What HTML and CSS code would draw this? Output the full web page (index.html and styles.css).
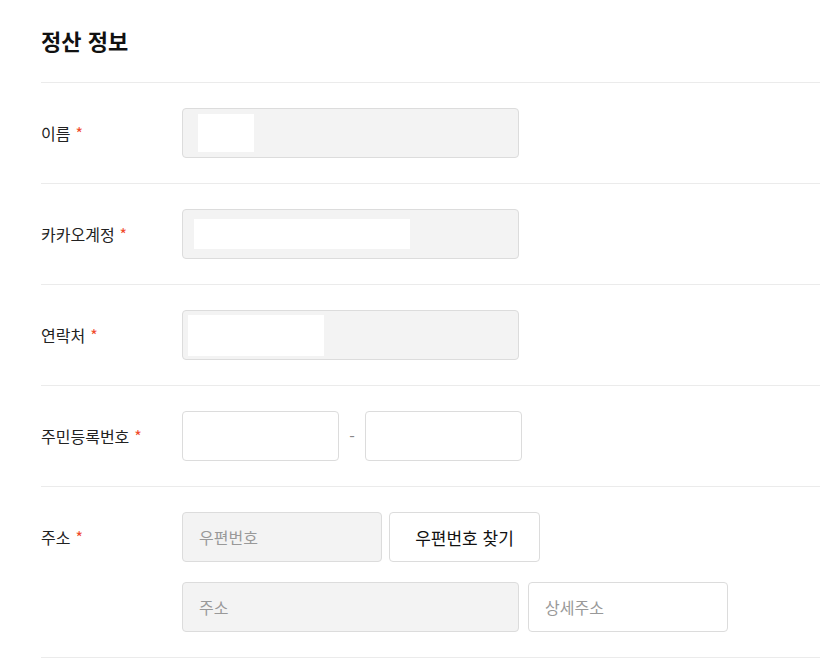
FILE: index.html
```html
<!DOCTYPE html>
<html lang="ko">
<head>
  <meta charset="UTF-8" />
  <meta name="viewport" content="width=device-width, initial-scale=1.0" />
  <title>정산 정보</title>
  <link rel="stylesheet" href="styles.css">
</head>
<body>
<main class="settle">
  <h2 class="settle-title">정산 정보</h2>

  <div class="row">
    <label class="row-label">이름 <span class="req">*</span></label>
    <div class="row-field">
      <div class="input readonly wide">
        <span class="mask mask-name"></span>
      </div>
    </div>
  </div>

  <div class="row">
    <label class="row-label">카카오계정 <span class="req">*</span></label>
    <div class="row-field">
      <div class="input readonly wide">
        <span class="mask mask-kakao"></span>
      </div>
    </div>
  </div>

  <div class="row">
    <label class="row-label">연락처 <span class="req">*</span></label>
    <div class="row-field">
      <div class="input readonly wide">
        <span class="mask mask-phone"></span>
      </div>
    </div>
  </div>

  <div class="row">
    <label class="row-label">주민등록번호 <span class="req">*</span></label>
    <div class="row-field">
      <div class="line">
        <input class="input half" type="text" />
        <span class="dash">-</span>
        <input class="input half" type="password" />
      </div>
    </div>
  </div>

  <div class="row">
    <label class="row-label">주소 <span class="req">*</span></label>
    <div class="row-field stack">
      <div class="line zip-line">
        <input class="input readonly narrow" type="text" placeholder="우편번호" disabled />
        <button class="btn" type="button">우편번호 찾기</button>
      </div>
      <div class="line addr-line">
        <input class="input readonly wide" type="text" placeholder="주소" disabled />
        <input class="input narrow" type="text" placeholder="상세주소" />
      </div>
    </div>
  </div>
</main>
</body>
</html>
```

FILE: styles.css
```css
body {
  margin: 0;
  padding: 0 0 0 41px;
  font-family: "Noto Sans CJK KR", "Noto Sans", sans-serif;
  color: #222;
  background: #fff;
  overflow: hidden;
}

.settle {
  width: 820px;
}

.settle-title {
  margin: 0;
  padding: 25px 0 27px;
  font-size: 22px;
  line-height: 30px;
  font-weight: 700;
  color: #111;
  border-bottom: 1px solid #ebebeb;
}

.row {
  display: flex;
  align-items: flex-start;
  padding: 25px 0;
  border-bottom: 1px solid #ebebeb;
}

.row-label {
  width: 141px;
  flex-shrink: 0;
  height: 50px;
  display: flex;
  align-items: center;
  font-size: 16px;
  color: #222;
}

.req {
  color: #f04a2b;
  margin-left: 5px;
}

.row-field.stack {
  display: flex;
  flex-direction: column;
  gap: 20px;
}

.line {
  display: flex;
  align-items: center;
}

.input {
  box-sizing: border-box;
  height: 50px;
  padding: 0 16px;
  border: 1px solid #dcdcdc;
  border-radius: 4px;
  background: #fff;
  font-family: inherit;
  font-size: 16px;
  color: #222;
  outline: none;
  display: flex;
  align-items: center;
}

.input::placeholder {
  color: #999;
}

.readonly {
  background: #f3f3f3;
}

.wide {
  width: 337px;
}

.narrow {
  width: 200px;
}

.half {
  width: 157px;
}

.dash {
  width: 26px;
  text-align: center;
  color: #888;
  font-size: 16px;
}

.zip-line {
  gap: 7px;
}

.addr-line {
  gap: 9px;
}

.btn {
  height: 50px;
  width: 151px;
  border: 1px solid #dcdcdc;
  border-radius: 4px;
  background: #fff;
  font-family: inherit;
  font-size: 17px;
  color: #111;
  cursor: pointer;
}

.mask {
  display: block;
  background: #fff;
}

.mask-name {
  width: 56px;
  height: 38px;
  margin-left: -1px;
}

.mask-kakao {
  width: 216px;
  height: 30px;
  margin-left: -5px;
}

.mask-phone {
  width: 136px;
  height: 41px;
  margin-left: -11px;
}
```
